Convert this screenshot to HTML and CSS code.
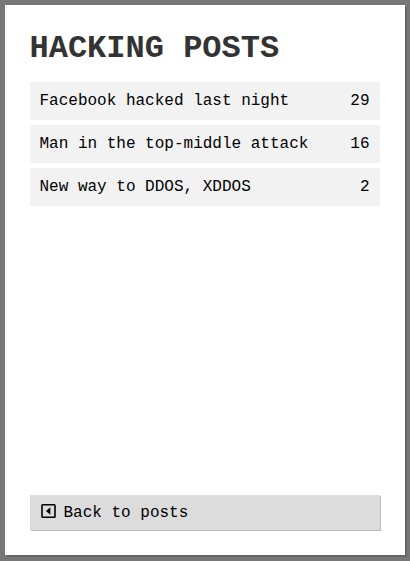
FILE: index.html
```html
<!DOCTYPE html>
<html lang="en">
<head>
<meta charset="utf-8">
<title>Hacking posts</title>
<link rel="stylesheet" href="styles.css">
</head>
<body>
<main class="panel">
  <h1 class="title">HACKING POSTS</h1>
  <ul class="posts">
    <li class="post"><span>Facebook hacked last night</span><span>29</span></li>
    <li class="post"><span>Man in the top-middle attack</span><span>16</span></li>
    <li class="post"><span>New way to DDOS, XDDOS</span><span>2</span></li>
  </ul>
  <button class="back" type="button">
    <svg class="icon" viewBox="0 0 16 16" aria-hidden="true"><rect x="2" y="1.75" width="13" height="12.5" rx="0.8" fill="none" stroke="currentColor" stroke-width="1.6"/><path d="M10.3 4.3v7.4L6 8z" fill="currentColor"/></svg>
    <span>Back to posts</span>
  </button>
</main>
</body>
</html>
```

FILE: styles.css
```css
* {
  box-sizing: border-box;
}

body {
  margin: 0;
  height: 100vh;
  padding: 5px;
  background: #777;
  color: #000;
  font: 16px/18px "Liberation Mono", monospace;
}

.panel {
  display: flex;
  flex-direction: column;
  width: 400px;
  height: 550px;
  padding: 25px;
  background: #fff;
  box-shadow: 2px 2px 0 #666;
}

.title {
  margin: 0 0 0 -0.5px;
  padding: 1px 0 15px;
  font-size: 32px;
  line-height: 36px;
  color: #333;
}

.posts {
  display: flex;
  flex-direction: column;
  gap: 5px;
  margin: 0;
  padding: 0;
  list-style: none;
}

.post {
  display: flex;
  justify-content: space-between;
  padding: 10px 10.5px 10px 9.5px;
  background: #f2f2f2;
}

.back {
  display: flex;
  align-items: center;
  gap: 7.5px;
  height: 35px;
  margin-top: auto;
  padding: 0 10px;
  border: 0;
  background: #dcdcdc;
  box-shadow: 1px 1px 0 #bbb;
  color: #000;
  font: inherit;
}

.icon {
  width: 16px;
  height: 16px;
  margin-bottom: 3px;
}
```
